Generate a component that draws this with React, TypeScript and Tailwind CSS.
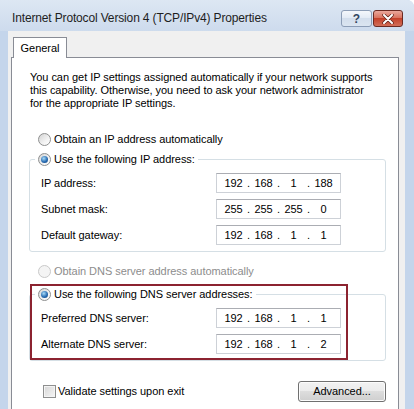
import React from 'react';
import clsx from 'clsx';

function Radio({ checked, disabled }: { checked?: boolean; disabled?: boolean }) {
  return (
    <span
      className={clsx(
        'flex h-[13px] w-[13px] shrink-0 items-center justify-center rounded-full border',
        disabled
          ? 'border-[#c9c9c9] bg-[#f4f4f4]'
          : 'border-[#8e8f8f] bg-[linear-gradient(135deg,#d4d4d4,#f2f2f2_60%,#ffffff)]'
      )}
    >
      {checked && (
        <span className="h-[7px] w-[7px] rounded-full bg-[radial-gradient(circle_at_40%_35%,#a9dcf8,#2a6db3_55%,#0d3d78)]" />
      )}
    </span>
  );
}

function RadioRow({
  label,
  checked,
  disabled,
}: {
  label: string;
  checked?: boolean;
  disabled?: boolean;
}) {
  return (
    <div className="flex h-[14px] items-center gap-[3px]">
      <Radio checked={checked} disabled={disabled} />
      <span className={disabled ? 'text-[#8d8d8d]' : 'text-black'}>{label}</span>
    </div>
  );
}

function IpField({ value }: { value: string[] }) {
  return (
    <div className="flex h-[20px] w-[125px] items-center border border-[#cdd1d7] border-t-[#abadb3] bg-white pl-[4px]">
      {value.map((octet, i) => (
        <React.Fragment key={i}>
          {i > 0 && <span className="w-[5px] text-center">.</span>}
          <span className="w-[25px] text-center">{octet}</span>
        </React.Fragment>
      ))}
    </div>
  );
}

function FieldRow({ label, value }: { label: string; value: string[] }) {
  return (
    <div className="flex h-[20px] items-center justify-between">
      <span>{label}</span>
      <IpField value={value} />
    </div>
  );
}

function GroupBox({ legend, children }: { legend: React.ReactNode; children: React.ReactNode }) {
  return (
    <fieldset className="rounded-[3px] border border-[#d5dfe5]">
      <legend className="ml-[5px] px-[3px]">{legend}</legend>
      <div className="flex flex-col gap-[6px] pt-[7px] pb-[6px] pl-[11px] pr-[44px]">{children}</div>
    </fieldset>
  );
}

export default function App() {
  return (
    <div
      className="h-[409px] w-[414px] overflow-hidden bg-white text-[11px] tracking-[-0.05px] text-black"
      style={{ fontFamily: '"Liberation Sans", Arial, sans-serif' }}
    >
      <div className="flex h-full flex-col rounded-tr-[7px] bg-[#c4d5eb]">
        {/* title bar */}
        <div className="flex h-[31px] shrink-0 items-start rounded-tr-[7px] bg-[linear-gradient(#dde7f3,#cddbed)] pl-[12px] pr-[11px]">
          <span className="mt-[10px] text-[12px] leading-[16px] tracking-[-0.15px] text-[#1e1e1e]">
            Internet Protocol Version 4 (TCP/IPv4) Properties
          </span>
          <div className="ml-auto mt-[10px] flex gap-[1px]">
            <button className="flex h-[17px] w-[31px] items-center justify-center rounded-[3px] border border-[#8c9db6] bg-[linear-gradient(#f4f7fb,#e3ebf5_45%,#d3deec_50%,#dbe5f1)] text-[12px] font-bold leading-none text-[#33465f]">
              ?
            </button>
            <button className="flex h-[17px] w-[30px] items-center justify-center rounded-[3px] border border-[#6b2a22] bg-[linear-gradient(#eaa89c,#d9735f_45%,#c4412a_50%,#d26e58)]">
              <svg width="12" height="10" viewBox="0 0 12 10">
                <path d="M2 1 L10 9 M10 1 L2 9" stroke="#5a2018" strokeWidth="3.4" strokeLinecap="round" />
                <path d="M2 1 L10 9 M10 1 L2 9" stroke="#ffffff" strokeWidth="2" strokeLinecap="round" />
              </svg>
            </button>
          </div>
        </div>

        {/* client area */}
        <div className="ml-[8px] mr-[9px] flex flex-1 flex-col bg-[#f0f0f0] pl-[3px] pr-[6px] pt-[6px]">
          <div className="relative z-10 -mb-px ml-[2px] flex h-[21px] w-[54px] items-center justify-center border border-b-0 border-[#898c95] bg-white">
            General
          </div>
          <div className="flex-1 border border-[#898c95] bg-white pt-[13px]">
            <p className="pl-[18px] leading-[13px]">
              You can get IP settings assigned automatically if your network supports
              <br />
              this capability. Otherwise, you need to ask your network administrator
              <br />
              for the appropriate IP settings.
            </p>

            <div className="mt-[22px] pl-[26px]">
              <RadioRow label="Obtain an IP address automatically" />
            </div>

            <div className="ml-[17px] mr-[12px] mt-[6px]">
              <GroupBox legend={<RadioRow label="Use the following IP address:" checked />}>
                <FieldRow label="IP address:" value={['192', '168', '1', '188']} />
                <FieldRow label="Subnet mask:" value={['255', '255', '255', '0']} />
                <FieldRow label="Default gateway:" value={['192', '168', '1', '1']} />
              </GroupBox>
            </div>

            <div className="mt-[12px] pl-[26px]">
              <RadioRow label="Obtain DNS server address automatically" disabled />
            </div>

            <div className="relative ml-[17px] mr-[12px] mt-[9px]">
              <GroupBox legend={<RadioRow label="Use the following DNS server addresses:" checked />}>
                <FieldRow label="Preferred DNS server:" value={['192', '168', '1', '1']} />
                <FieldRow label="Alternate DNS server:" value={['192', '168', '1', '2']} />
              </GroupBox>
              {/* highlight annotation */}
              <div className="pointer-events-none absolute left-[1px] top-[-3px] h-[76px] w-[318px] border-2 border-[#8c2330]" />
            </div>

            <div className="ml-[31px] mr-[12px] mt-[20px] flex h-[21px] items-center justify-between">
              <label className="flex items-center gap-[2px]">
                <span className="h-[13px] w-[13px] border border-[#8e8f8f] bg-[linear-gradient(135deg,#d6d6d6,#f6f6f6)] shadow-[inset_0_0_0_1px_#f4f4f4]" />
                <span>Validate settings upon exit</span>
              </label>
              <button className="h-[21px] w-[88px] rounded-[3px] border border-[#707070] bg-[linear-gradient(#f2f2f2,#ebebeb_50%,#dddddd_50%,#cfcfcf)] shadow-[inset_0_0_0_1px_#fcfcfc]">
                Advanced...
              </button>
            </div>
            <div className="h-[20px]" />
          </div>
        </div>
      </div>
    </div>
  );
}
